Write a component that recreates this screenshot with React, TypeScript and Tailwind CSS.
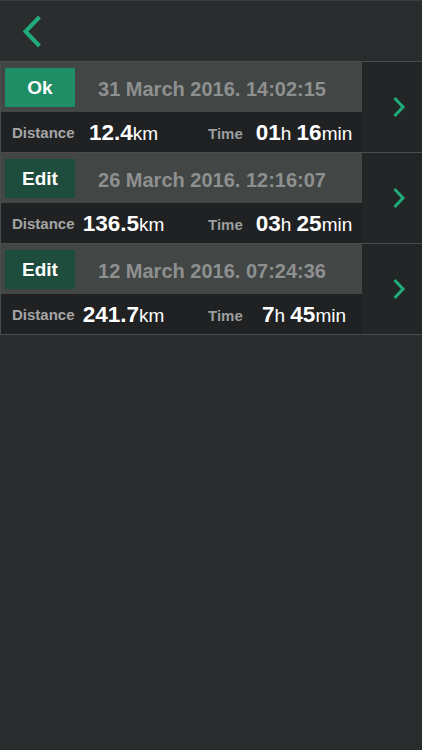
import React from 'react';

interface Ride {
  id: number;
  editing: boolean;
  date: string;
  distance: string;
  hours: string;
  minutes: string;
}

const rides: Ride[] = [
  { id: 1, editing: true, date: '31 March 2016. 14:02:15', distance: '12.4', hours: '01', minutes: '16' },
  { id: 2, editing: false, date: '26 March 2016. 12:16:07', distance: '136.5', hours: '03', minutes: '25' },
  { id: 3, editing: false, date: '12 March 2016. 07:24:36', distance: '241.7', hours: '7', minutes: '45' },
];

function RideRow({ ride }: { ride: Ride }) {
  return (
    <div className="flex h-[91px] border-b border-l border-[#4a4d4e]">
      <div className="flex w-[361px] flex-col">
        <div className="flex h-[50px] items-center bg-[#424645] pl-[4px]">
          <button
            className={`flex h-[39px] w-[70px] items-center justify-center text-[19px] leading-none font-bold text-white ${
              ride.editing ? 'bg-[#1f8e67]' : 'bg-[#1e4c3d]'
            }`}
          >
            {ride.editing ? 'Ok' : 'Edit'}
          </button>
          <div className="flex-1 pt-[3px] pr-[13px] text-center text-[20px] leading-none font-bold text-[#8e9090]">
            {ride.date}
          </div>
        </div>
        <div className="flex h-[40px] items-end bg-[#1f2122] pb-[8px] pl-[11px] text-white">
          <span className="mb-[4px] w-[68px] text-[15px] leading-none font-bold text-[#a4a5a5]">Distance</span>
          <span className="w-[87px] text-center leading-none whitespace-nowrap">
            <span className="text-[22.5px] font-bold">{ride.distance}</span>
            <span className="text-[19px]">km</span>
          </span>
          <span className="mb-[3px] ml-[41px] w-[42px] text-[15px] leading-none font-bold text-[#9c9d9d]">Time</span>
          <span className="w-[108px] text-center leading-none whitespace-nowrap">
            <span className="text-[22.5px] font-bold">{ride.hours}</span>
            <span className="text-[19px]">h </span>
            <span className="text-[22.5px] font-bold">{ride.minutes}</span>
            <span className="text-[19px]">min</span>
          </span>
        </div>
      </div>
      <div className="flex flex-1 items-center bg-[#232627] pl-[30px]">
        <svg width="14" height="24" viewBox="0 0 14 24" fill="none">
          <path d="M2.5 3 L11 12 L2.5 21" stroke="#21ac7d" strokeWidth="3" strokeLinejoin="miter" />
        </svg>
      </div>
    </div>
  );
}

export default function App() {
  return (
    <div
      className="h-[750px] w-[422px] border-t border-[#3a3d3e] bg-[#2a2d2e]"
      style={{ fontFamily: '"Liberation Sans", Arial, sans-serif' }}
    >
      <div className="h-[60px] pt-[11px] pl-[20px]">
        <svg width="24" height="40" viewBox="0 0 24 40" fill="none">
          <path d="M19.5 5 L5.5 19.5 L19.5 34" stroke="#21ac7d" strokeWidth="4" strokeLinejoin="miter" />
        </svg>
      </div>
      <div className="border-t border-[#4a4d4e]">
        {rides.map((ride) => (
          <RideRow key={ride.id} ride={ride} />
        ))}
      </div>
    </div>
  );
}
